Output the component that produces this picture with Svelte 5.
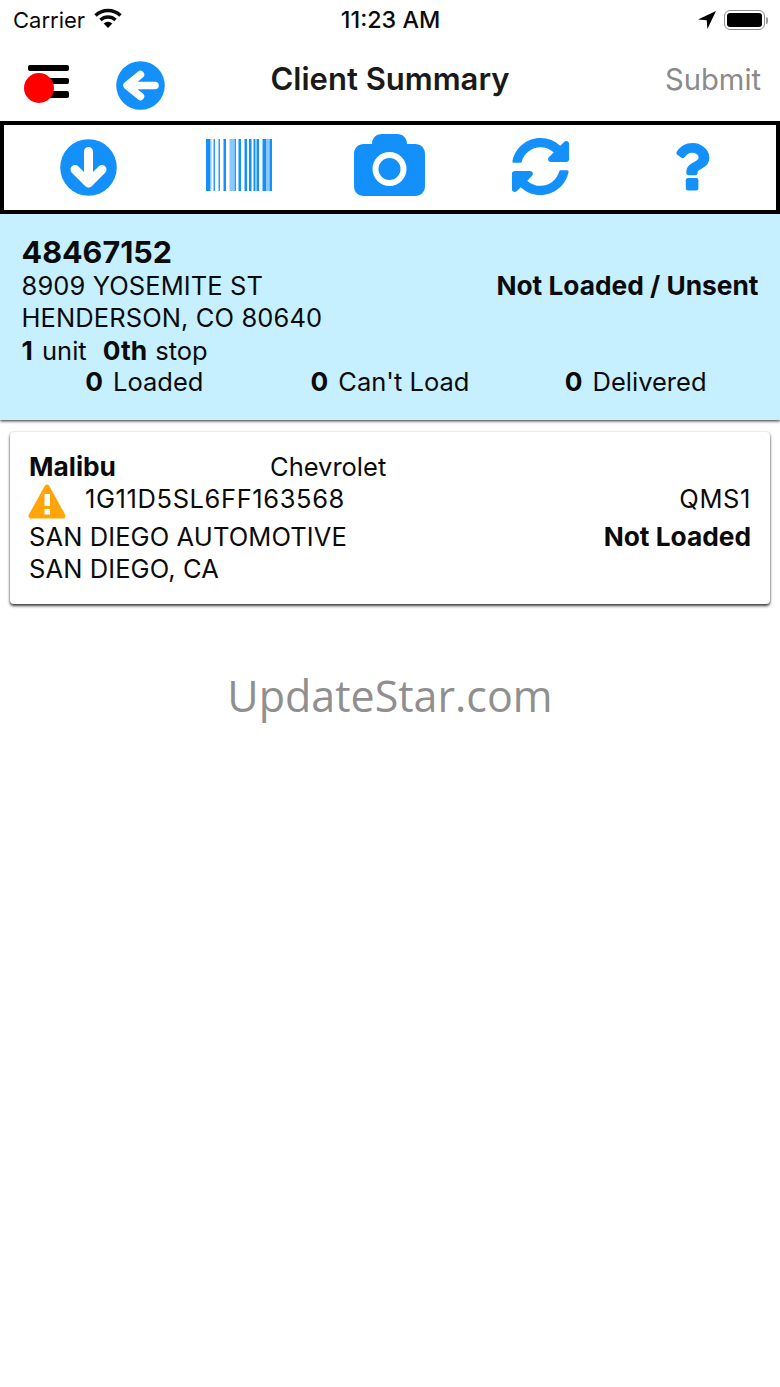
<script>
  const bars = [
    [206, 4, 1], [210, 1.5, .5], [213.5, 1.5, .9], [218.5, 1.5, .9], [223.5, 2.5, 1],
    [229.5, 5, .5], [234.5, 1.5, .9], [238.5, 2.5, 1], [244.5, 2.5, 1], [249, 2.5, 1],
    [253.5, 2, 1], [256.5, 2.5, 1], [262.5, 3.5, 1], [266, 3.5, .5], [269.5, 2.5, 1]
  ];
</script>

<div class="screen">
  <header class="status">
    <div class="status-left">
      <span class="carrier">Carrier</span>
      <svg class="wifi" viewBox="0 0 28 20" width="28" height="20" aria-hidden="true">
        <path d="M1.500 7.500a18 18 0 0 1 25 0" class="wave" />
        <path d="M6.500 12a11 11 0 0 1 15 0" class="wave" />
        <path d="M14 20l-4.300-4.400a6.200 6.200 0 0 1 8.600 0z" />
      </svg>
    </div>
    <span class="time">11:23 AM</span>
    <div class="status-right">
      <svg viewBox="0 0 18 18" width="18" height="18" aria-hidden="true">
        <path d="M18 0L0 8.500l8.700.7.700 8.800z" />
      </svg>
      <div class="battery"><div class="charge"></div></div>
      <div class="nub"></div>
    </div>
  </header>

  <nav class="nav">
    <div class="menu">
      <span></span><span></span><span></span>
      <i class="dot"></i>
    </div>
    <svg class="back" viewBox="0 0 49 49" width="49" height="49" aria-hidden="true">
      <circle cx="24.500" cy="24.500" r="24.300" fill="#1490fb" />
      <path d="M39 24.500H13M24.500 13.500L11 24.500l13.500 11" class="white-stroke" />
    </svg>
    <h1>Client Summary</h1>
    <span class="submit">Submit</span>
  </nav>

  <section class="tools">
    <div class="tool">
      <svg viewBox="0 0 57 57" width="57" height="57" aria-hidden="true">
        <circle cx="28.500" cy="28.500" r="28.300" fill="#1490fb" />
        <path d="M28.500 12.500v30M15 30.500l13.500 13.500L42 30.500" class="white-stroke thick" />
      </svg>
    </div>
    <div class="tool">
      <svg class="lift" viewBox="206 139 67 52" width="67" height="52" aria-hidden="true">
        {#each bars as b}
          <rect x={b[0]} y="139" width={b[1]} height="52" fill="#1490fb" opacity={b[2]} />
        {/each}
      </svg>
    </div>
    <div class="tool">
      <svg class="lift camera" viewBox="0 0 71 62" width="71" height="62" aria-hidden="true">
        <path fill="#1490fb" fill-rule="evenodd" d="M10 10h8c0-6 4-10 10-10h15c6 0 10 4 10 10h8c6 0 10 4 10 10v32c0 6-4 10-10 10H10C4 62 0 58 0 52V20c0-6 4-10 10-10zM35.500 18a17 17 0 1 0 0 34 17 17 0 0 0 0-34zm0 6a11 11 0 1 1 0 22 11 11 0 0 1 0-22z" />
      </svg>
    </div>
    <div class="tool">
      <svg class="sync" viewBox="0 0 512 512" width="59" height="59" aria-hidden="true">
        <path fill="#1490fb" d="M370.720 133.280C339.458 104.008 298.888 87.962 255.848 88c-77.458.068-144.328 53.178-162.791 126.850-1.344 5.363-6.122 9.150-11.651 9.150H24.103c-7.498 0-13.194-6.807-11.807-14.176C33.933 94.924 134.813 8 256 8c66.448 0 126.791 26.136 171.315 68.685L463.030 40.970C478.149 25.851 504 36.559 504 57.941V192c0 13.255-10.745 24-24 24H345.941c-21.382 0-32.090-25.851-16.970-40.971l41.749-41.749zM32 296h134.059c21.382 0 32.090 25.851 16.970 40.971l-41.750 41.750c31.262 29.273 71.835 45.319 114.876 45.280 77.418-.070 144.315-53.144 162.787-126.849 1.344-5.363 6.122-9.150 11.651-9.150h57.304c7.498 0 13.194 6.807 11.807 14.176C478.067 417.076 377.187 504 256 504c-66.448 0-126.791-26.136-171.315-68.685L48.970 471.030C33.851 486.149 8 475.441 8 454.059V320c0-13.255 10.745-24 24-24z" />
      </svg>
    </div>
    <div class="tool">
      <svg class="help" viewBox="0 0 384 512" width="36" height="48" aria-hidden="true">
        <path fill="#1490fb" d="M202 0C122 0 70.500 32.700 30 91c-7.400 10.600-5 25 5 33l43 32.600c10.400 7.900 25 6 33.300-4.100 25-31.400 43.600-49.500 82.700-49.500 30.800 0 68.800 19.800 68.800 49.600 0 22.600-18.600 34.100-49 51.200-35.400 19.900-82.300 44.600-82.300 106.400V320c0 13.300 10.700 24 24 24h72.500c13.300 0 24-10.700 24-24v-5.800c0-42.800 125.300-44.600 125.300-160.600C377.500 66.300 286.900 0 202 0z" />
        <rect x="126" y="372" width="134" height="134" rx="24" fill="#1490fb" />
      </svg>
    </div>
  </section>

  <section class="summary">
    <div class="number">48467152</div>
    <div class="row">
      <span class="caps">8909 YOSEMITE ST</span>
      <strong>Not Loaded / Unsent</strong>
    </div>
    <div class="caps">HENDERSON, CO 80640</div>
    <div class="units"><strong class="count">1</strong> unit <strong class="stop">0th</strong> stop</div>
    <div class="stats">
      <div><strong>0</strong>Loaded</div>
      <div><strong>0</strong>Can't Load</div>
      <div><strong>0</strong>Delivered</div>
    </div>
  </section>

  <article class="card">
    <div class="model">
      <strong>Malibu</strong>
      <span>Chevrolet</span>
    </div>
    <div class="row vin">
      <div class="vin-left">
        <svg viewBox="0 0 38 35" width="38" height="35" aria-hidden="true">
          <path d="M19 3L3 32h32z" fill="#ffa50a" stroke="#ffa50a" stroke-width="5" stroke-linejoin="round" />
          <rect x="16.500" y="10" width="5.500" height="12" fill="#fff" />
          <rect x="16.500" y="25" width="5.500" height="5.500" fill="#fff" />
        </svg>
        <span class="code">1G11D5SL6FF163568</span>
      </div>
      <span class="code">QMS1</span>
    </div>
    <div class="row">
      <span class="caps">SAN DIEGO AUTOMOTIVE</span>
      <strong>Not Loaded</strong>
    </div>
    <div class="caps">SAN DIEGO, CA</div>
  </article>

  <div class="watermark">UpdateStar.com</div>
</div>

<style>
  :global(body) {
    margin: 0;
    background: #fff;
  }
  .screen {
    width: 780px;
    height: 1387px;
    overflow: hidden;
    background: #fff;
    color: #0b0b0b;
    font-family: Inter, "Liberation Sans", sans-serif;
    font-size: 25.500px;
    line-height: 32px;
  }
  strong {
    font-weight: 700;
    font-size: 26.300px;
  }
  .caps {
    letter-spacing: 0.1px;
  }
  .code {
    letter-spacing: 0.6px;
  }
  .status {
    height: 40px;
    display: grid;
    grid-template-columns: 1fr auto 1fr;
    align-items: center;
    padding: 0 12px 0 13px;
    font-size: 22px;
  }
  .status-left {
    display: flex;
    align-items: center;
    gap: 9px;
  }
  .wifi {
    margin-top: -4px;
  }
  .wifi .wave {
    fill: none;
    stroke: #0b0b0b;
    stroke-width: 3.400;
  }
  .time {
    font-weight: 500;
    font-size: 23.300px;
  }
  .status-right {
    display: flex;
    align-items: center;
    justify-content: flex-end;
  }
  .status-right svg {
    margin-right: 8px;
  }
  .battery {
    box-sizing: border-box;
    width: 41px;
    height: 20px;
    border: 1.500px solid #8b8b8b;
    border-radius: 6px;
    padding: 2px;
  }
  .charge {
    width: 100%;
    height: 100%;
    background: #000;
    border-radius: 3px;
  }
  .nub {
    width: 2px;
    height: 7px;
    margin-left: 1px;
    background: #9a9a9a;
    border-radius: 0 2px 2px 0;
  }
  .nav {
    position: relative;
    height: 81px;
    display: flex;
    align-items: center;
    padding: 0 19px 0 28px;
    box-sizing: border-box;
  }
  .menu {
    position: relative;
    width: 41px;
    height: 33px;
    margin-top: 1px;
    display: flex;
    flex-direction: column;
    justify-content: space-between;
  }
  .menu span {
    display: block;
    height: 6.500px;
    background: #000;
    border-radius: 2px;
  }
  .dot {
    position: absolute;
    left: -4px;
    top: 8px;
    width: 30px;
    height: 30px;
    background: #fe0000;
    border-radius: 50%;
  }
  .back {
    margin-left: 47px;
    margin-top: 9px;
  }
  .white-stroke {
    fill: none;
    stroke: #fff;
    stroke-width: 7.500;
    stroke-linecap: round;
    stroke-linejoin: round;
  }
  .white-stroke.thick {
    stroke-width: 9;
  }
  h1 {
    position: absolute;
    left: 0;
    right: 0;
    top: 19px;
    margin: 0;
    text-align: center;
    font-size: 31px;
    line-height: 40px;
    font-weight: 600;
    color: #1a1a1a;
  }
  .submit {
    margin-left: auto;
    font-size: 29.200px;
    line-height: 40px;
    color: #8a8a8a;
    margin-top: -2px;
  }
  .tools {
    box-sizing: border-box;
    height: 93px;
    border: 4px solid #000;
    display: grid;
    grid-template-columns: repeat(5, 151px);
    padding-left: 9px;
    align-items: center;
  }
  .tool {
    display: flex;
    justify-content: center;
    align-items: center;
  }
  .lift {
    margin-bottom: 6px;
  }
  .camera {
    margin-right: 2px;
  }
  .sync {
    margin-right: 2px;
    margin-bottom: 2px;
  }
  .help {
    margin-bottom: 2px;
    margin-right: 1px;
  }
  .summary {
    box-sizing: border-box;
    height: 206px;
    padding: 22px 21.500px 0;
    background: #c6efff;
    box-shadow: 0 1px 3px rgba(0, 0, 0, 0.85);
  }
  .number {
    font-size: 30.500px;
    font-weight: 700;
    margin-bottom: 2px;
  }
  .row {
    display: flex;
    justify-content: space-between;
  }
  .units {
    margin-top: 1px;
  }
  .units .count {
    margin-right: 2px;
  }
  .units .stop {
    margin-left: 9px;
    margin-right: 1px;
  }
  .stats {
    display: grid;
    grid-template-columns: repeat(3, 1fr);
    margin-top: -1px;
    text-align: center;
  }
  .stats strong {
    margin-right: 10px;
  }
  .card {
    box-sizing: border-box;
    height: 172px;
    margin: 12px 10px 0;
    padding: 19px 19px 0;
    border-radius: 4px;
    background: #fff;
    box-shadow: 0 2px 3px rgba(0, 0, 0, 0.75), 0 0 2px rgba(0, 0, 0, 0.2);
  }
  .model {
    display: grid;
    grid-template-columns: 241px auto;
  }
  .vin {
    height: 38px;
  }
  .vin-left {
    display: flex;
    gap: 19px;
    align-items: flex-start;
  }
  .vin-left svg {
    margin-left: -1px;
    margin-top: 1px;
  }
  .watermark {
    margin-top: 62px;
    text-align: center;
    font-family: "Open Sans", sans-serif;
    font-weight: 400;
    font-size: 43px;
    line-height: 60px;
    color: #8f8f8f;
  }
</style>
